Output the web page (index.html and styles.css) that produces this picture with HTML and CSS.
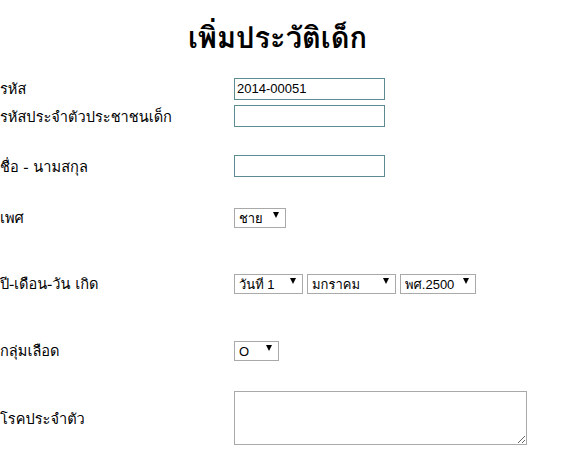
FILE: index.html
```html
<!DOCTYPE html>
<html lang="th">
<head>
<meta charset="utf-8">
<link rel="stylesheet" href="styles.css">
</head>
<body>
<div class="page">
  <h1 class="title">เพิ่มประวัติเด็ก</h1>
  <form class="form">
    <div class="row row-1">
      <label class="label">รหัส</label>
      <input class="text" type="text" value="2014-00051">
    </div>
    <div class="row row-2">
      <label class="label">รหัสประจำตัวประชาชนเด็ก</label>
      <input class="text" type="text">
    </div>
    <div class="row row-3">
      <label class="label">ชื่อ - นามสกุล</label>
      <input class="text" type="text">
    </div>
    <div class="row row-4">
      <label class="label">เพศ</label>
      <span class="sel sel-sex"><select><option>ชาย</option><option>หญิง</option></select></span>
    </div>
    <div class="row row-5">
      <label class="label">ปี-เดือน-วัน เกิด</label>
      <div class="sels">
        <span class="sel sel-day"><select><option>วันที่ 1</option></select></span>
        <span class="sel sel-month"><select><option>มกราคม</option></select></span>
        <span class="sel sel-year"><select><option>พศ.2500</option></select></span>
      </div>
    </div>
    <div class="row row-6">
      <label class="label">กลุ่มเลือด</label>
      <span class="sel sel-blood"><select><option>O</option><option>A</option><option>B</option><option>AB</option></select></span>
    </div>
    <div class="row row-7">
      <label class="label">โรคประจำตัว</label>
      <textarea class="area"></textarea>
    </div>
  </form>
</div>
</body>
</html>
```
FILE: styles.css
```css
html, body {
  margin: 0;
  padding: 0;
  background: #ffffff;
}
body {
  font-family: Tahoma, Loma, Garuda, "Noto Sans Thai", "Liberation Sans", "DejaVu Sans", sans-serif;
  color: #000;
}
.page {
  width: 555px;
}
.title {
  margin: 0;
  padding-top: 22px;
  height: 52px;
  box-sizing: border-box;
  text-align: center;
  font-size: 29px;
  line-height: 32px;
  font-weight: bold;
}
.form {
  display: flex;
  flex-direction: column;
}
.row {
  display: flex;
  align-items: center;
}
.label {
  width: 234px;
  flex: none;
  font-size: 14.6px;
}
.row-1 { margin-top: 26px; height: 21px; }
.row-2 { margin-top: 6px; height: 22px; }
.row-3 { margin-top: 28px; height: 22px; }
.row-4 { margin-top: 30px; height: 20px; }
.row-5 { margin-top: 46px; height: 20px; }
.row-6 { margin-top: 47px; height: 20px; }
.row-7 { margin-top: 31px; height: 54px; }

.text {
  box-sizing: border-box;
  width: 151px;
  height: 22px;
  margin: 0;
  padding: 1px 2px;
  border: 1px solid #5d8b92;
  font-family: "Liberation Sans", Arial, sans-serif;
  font-size: 13px;
  color: #000;
  outline: none;
}
.sels {
  display: flex;
  gap: 4px;
}
.sel {
  position: relative;
  display: inline-block;
}
.sel select {
  -webkit-appearance: none;
  appearance: none;
  box-sizing: border-box;
  height: 20px;
  margin: 0;
  padding: 0 14px 0 4px;
  border: 1px solid #a9a9a9;
  border-radius: 0;
  background: #fff;
  font-family: "Liberation Sans", Loma, Garuda, "Noto Sans Thai", sans-serif;
  font-size: 13px;
  color: #000;
}
.sel::after {
  content: "";
  position: absolute;
  right: 7px;
  top: 7px;
  border-left: 3px solid transparent;
  border-right: 3px solid transparent;
  border-top: 6px solid #000;
  pointer-events: none;
}
.sel-sex select { width: 52px; }
.sel-day select { width: 69px; }
.sel-month select { width: 89px; }
.sel-year select { width: 76px; }
.sel-blood select { width: 45px; }

.area {
  box-sizing: border-box;
  width: 293px;
  height: 54px;
  margin: 0;
  border: 1px solid #a9a9a9;
  font-family: "Liberation Mono", monospace;
  font-size: 13px;
}
```
